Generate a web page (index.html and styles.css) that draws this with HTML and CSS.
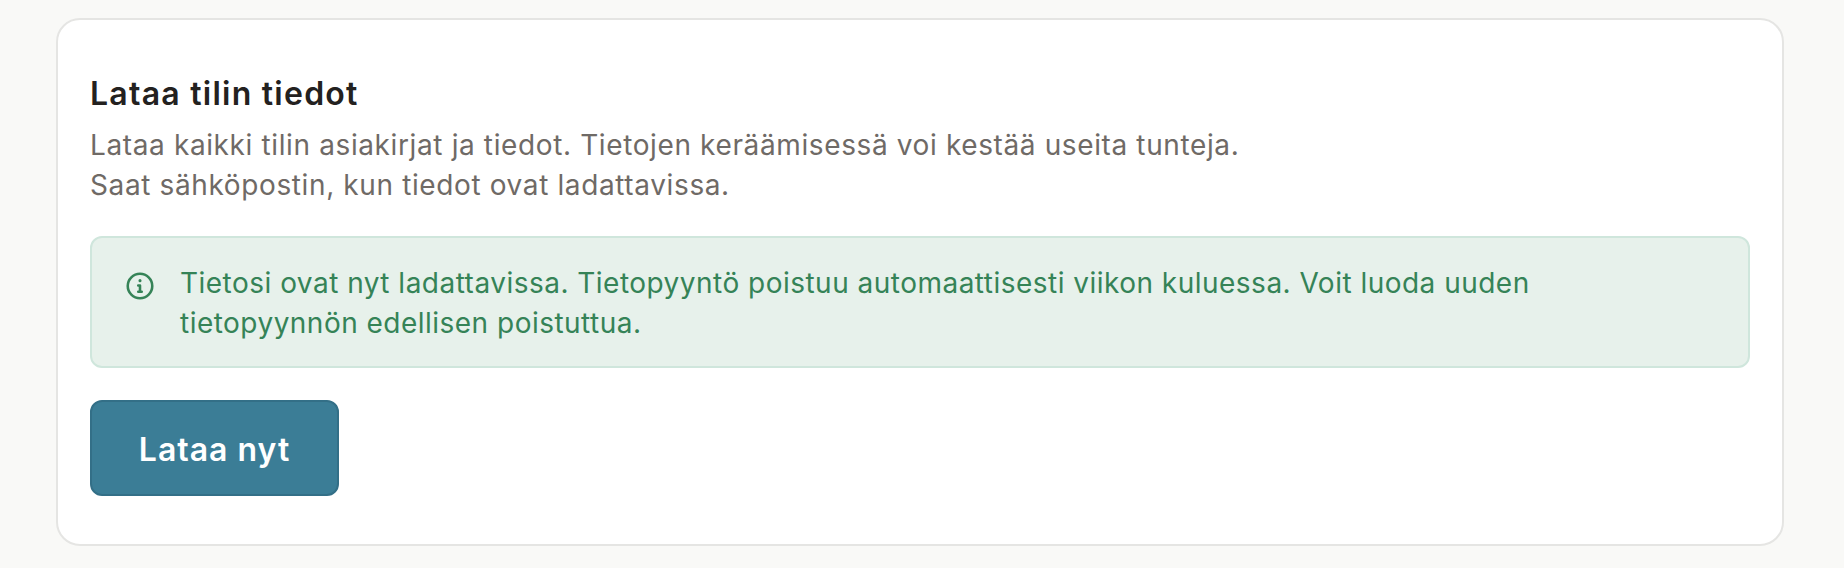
FILE: index.html
```html
<!DOCTYPE html>
<html lang="fi">
<head>
    <meta charset="UTF-8">
    <title>Lataa tilin tiedot</title>
    <link rel="stylesheet" href="styles.css">
</head>
<body>
    <section class="card">
        <h2 class="card-title">Lataa tilin tiedot</h2>
        <p class="card-text">Lataa kaikki tilin asiakirjat ja tiedot. Tietojen keräämisessä voi kestää useita tunteja.<br>Saat sähköpostin, kun tiedot ovat ladattavissa.</p>
        <div class="alert">
            <svg class="alert-icon" viewBox="0 0 24 24" fill="none" stroke="currentColor" stroke-width="2.2" stroke-linecap="round" stroke-linejoin="round">
                <circle cx="12" cy="12" r="10.5"/>
                <path d="M10.5 11.5H12V17M10.5 17H13.5"/>
                <path d="M12 7.2v.2" stroke-width="2.6"/>
            </svg>
            <p class="alert-text">Tietosi ovat nyt ladattavissa. Tietopyyntö poistuu automaattisesti viikon kuluessa. Voit luoda uuden tietopyynnön edellisen poistuttua.</p>
        </div>
        <button class="btn">Lataa nyt</button>
    </section>
</body>
</html>
```

FILE: styles.css
```css
body {
    font-family: "Inter", sans-serif;
    background-color: #f9f9f7;
    margin: 0;
    padding: 18px 60px 22px 56px;
}
.card {
    background: #fff;
    border: 2px solid #e5e5e3;
    border-radius: 24px;
    padding: 32px;
    height: 528px;
    box-sizing: border-box;
}
.card-title {
    margin: 20px 0 0;
    font-size: 32px;
    line-height: 44px;
    font-weight: 600;
    letter-spacing: 1.25px;
    color: #232120;
}
.card-text {
    margin: 9px 0 0;
    font-size: 28px;
    line-height: 40px;
    letter-spacing: 0.62px;
    color: #6f6a66;
}
.alert {
    display: flex;
    gap: 26px;
    margin-top: 31px;
    padding: 25px 34px 23px;
    background: #e7f1eb;
    border: 2px solid #cfe6dc;
    border-radius: 12px;
    color: #358357;
}
.alert-icon {
    width: 28px;
    height: 28px;
    flex: none;
    margin-top: 9px;
}
.alert-text {
    margin: 0;
    max-width: 1400px;
    font-size: 28px;
    line-height: 40px;
    letter-spacing: 0.48px;
}
.btn {
    display: block;
    width: 249px;
    height: 96px;
    margin-top: 32px;
    padding: 2px 0 0;
    background-color: #3b7d96;
    border: 2px solid #336f87;
    border-radius: 12px;
    color: #fff;
    font-family: inherit;
    font-size: 32px;
    font-weight: 600;
    letter-spacing: 1px;
}
```
